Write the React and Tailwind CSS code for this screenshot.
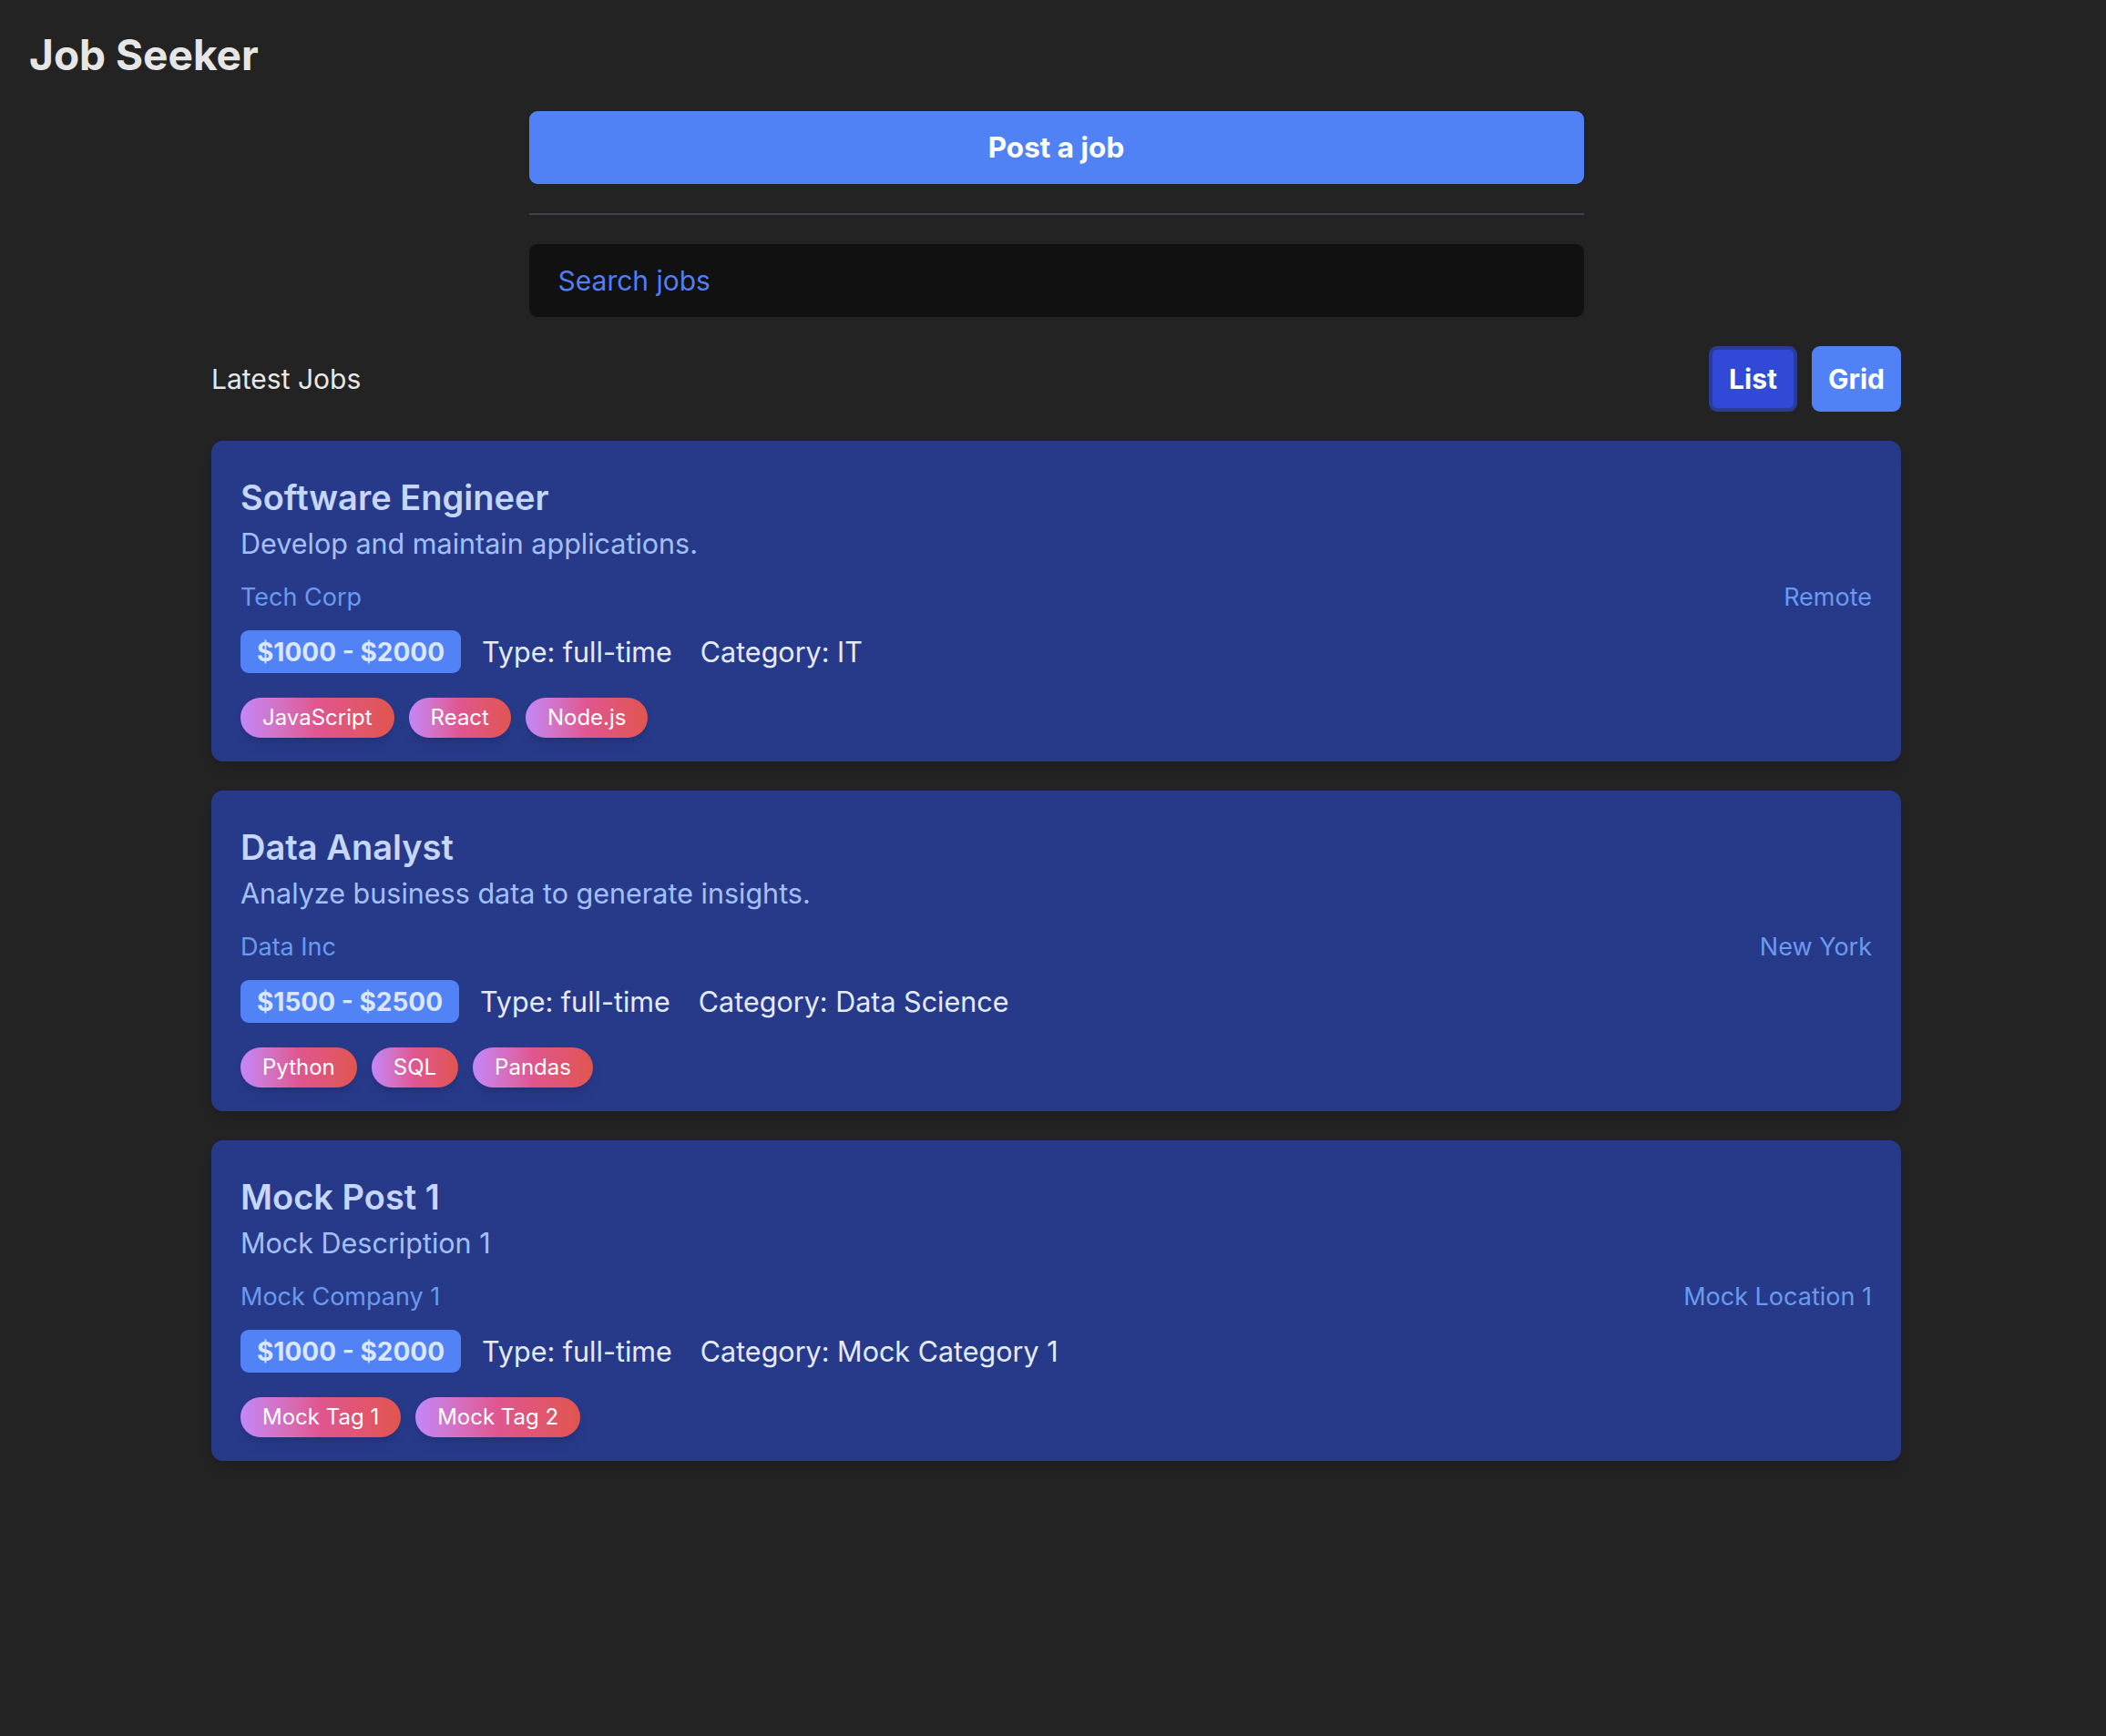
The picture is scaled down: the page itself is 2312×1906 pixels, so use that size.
import { useState } from "react";

const jobs = [
  {
    title: "Software Engineer",
    description: "Develop and maintain applications.",
    company: "Tech Corp",
    location: "Remote",
    salary: "$1000 - $2000",
    type: "full-time",
    category: "IT",
    tags: ["JavaScript", "React", "Node.js"],
  },
  {
    title: "Data Analyst",
    description: "Analyze business data to generate insights.",
    company: "Data Inc",
    location: "New York",
    salary: "$1500 - $2500",
    type: "full-time",
    category: "Data Science",
    tags: ["Python", "SQL", "Pandas"],
  },
  {
    title: "Mock Post 1",
    description: "Mock Description 1",
    company: "Mock Company 1",
    location: "Mock Location 1",
    salary: "$1000 - $2000",
    type: "full-time",
    category: "Mock Category 1",
    tags: ["Mock Tag 1", "Mock Tag 2"],
  },
];

const JobCard = ({ job }) => {
  return (
    <div className="bg-[#273a8a] rounded-[13px] px-[32px] pt-[40px] pb-[26px] shadow-lg">
      <h3 className="text-[38px] leading-[45px] font-semibold text-[#c5d6ff]">
        {job.title}
      </h3>
      <p className="mt-[8px] text-[30.5px] leading-[40px] text-[#a3c0fa]">
        {job.description}
      </p>
      <div className="mt-[21px] flex justify-between text-[27px] leading-[36px] text-[#6a9af0]">
        <span>{job.company}</span>
        <span>{job.location}</span>
      </div>
      <div className="mt-[18px] flex items-center text-[30.5px] text-[#e4eaff]">
        <span className="h-[47px] flex items-center px-[18px] rounded-[9px] bg-[#5283f6] text-[28px] font-bold text-[#dbe7ff]">
          {job.salary}
        </span>
        <span className="ml-[23px]">Type: {job.type}</span>
        <span className="ml-[31px]">Category: {job.category}</span>
      </div>
      <div className="mt-[27px] flex gap-[16px]">
        {job.tags.map((tag) => (
          <span
            key={tag}
            className="h-[44px] flex items-center px-[24px] rounded-full bg-gradient-to-r from-[#c386f8] via-[#e0558f] to-[#e1554c] text-[24px] text-white shadow-lg"
          >
            {tag}
          </span>
        ))}
      </div>
    </div>
  );
};

export default function App() {
  const [view, setView] = useState("list");

  return (
    <div className="min-h-screen bg-[#232323] pl-[7px] pb-[200px] font-['Inter',_'Noto_Sans',_sans-serif]">
      <h1 className="pl-[25px] pt-[33px] text-[46px] leading-[54px] font-bold text-[#e6e6e6]">
        Job Seeker
      </h1>

      <div className="w-[1158px] mx-auto mt-[35px]">
        <button className="w-full h-[80px] rounded-[9px] bg-[#5082f5] text-[31.5px] font-bold text-white">
          Post a job
        </button>
        <div className="mt-[32px] h-[2px] bg-[#3b4250]" />
        <div className="mt-[32px] h-[80px] rounded-[9px] bg-[#111111] flex items-center px-[32px]">
          <input
            className="w-full bg-transparent outline-none text-[30px] text-white placeholder:text-[#4f7ef5]"
            placeholder="Search jobs"
          />
        </div>
      </div>

      <div className="w-[1855px] mx-auto mt-[32px]">
        <div className="flex items-center justify-between">
          <h2 className="text-[30px] text-[#e8e8e8]">Latest Jobs</h2>
          <div className="flex gap-[16px]">
            <button
              onClick={() => setView("list")}
              className={`w-[97px] h-[72px] rounded-[9px] text-[30px] font-bold text-white ${
                view === "list"
                  ? "bg-[#3049d6] border-4 border-[#2c3c94]"
                  : "bg-[#5082f5]"
              }`}
            >
              List
            </button>
            <button
              onClick={() => setView("grid")}
              className={`w-[98px] h-[72px] rounded-[9px] text-[30px] font-bold text-white ${
                view === "grid"
                  ? "bg-[#3049d6] border-4 border-[#2c3c94]"
                  : "bg-[#5082f5]"
              }`}
            >
              Grid
            </button>
          </div>
        </div>

        <div className="mt-[32px] flex flex-col gap-[32px]">
          {jobs.map((job) => (
            <JobCard key={job.title} job={job} />
          ))}
        </div>
      </div>
    </div>
  );
}
